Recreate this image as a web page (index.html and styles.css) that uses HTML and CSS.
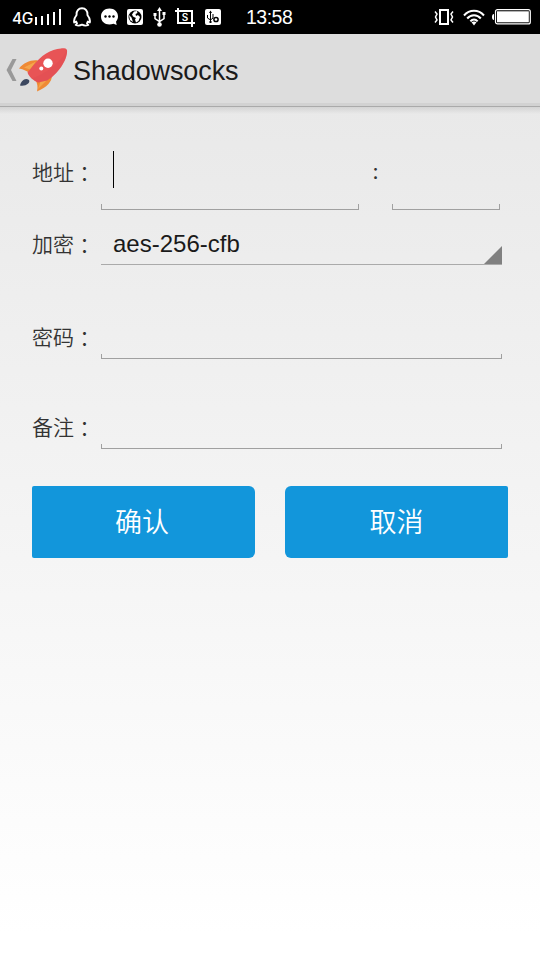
FILE: index.html
```html
<!DOCTYPE html>
<html lang="zh-CN">
<head>
<meta charset="utf-8">
<title>Shadowsocks</title>
<link rel="stylesheet" href="styles.css">
</head>
<body>
<header class="status">
  <span class="network">4G</span>
  <svg class="signal" width="27" height="18" viewBox="0 0 27 18" fill="#fff"><path d="M0 9h2v8H0zM6 8h2v9H6zM12 6h2v11h-2zM18 4h2v13h-2zM24 1h2v16h-2z"/></svg>
  <svg class="qq" width="18" height="20" viewBox="0 0 18 20" fill="none" stroke="#fff" stroke-width="1.900" stroke-linejoin="round"><path d="M3.600 8C3.200 3.800 5.500 1.200 9 1.200S14.800 3.800 14.400 8C16 10 17.500 12.500 16.800 15.500L14.900 14.500 14 16.500 15.300 18C13 19 10.500 18.500 9 17.700 7.500 18.500 5 19 2.700 18L4 16.500 3.100 14.500 1.200 15.500C.5 12.500 2 10 3.600 8Z"/></svg>
  <svg class="bubble" width="17" height="18" viewBox="0 0 17 18"><path fill="#fff" d="M8.500.5C13.500.5 17 4 17 8.500c0 2-.8 3.800-2 5.200l.7 3.300-3.200-1.300C6 18 0 14.700 0 8.500 0 4 3.500.5 8.500.5Z"/><g fill="#000"><circle cx="4.500" cy="8.500" r="1.200"/><circle cx="8.500" cy="8.500" r="1.200"/><circle cx="12.500" cy="8.500" r="1.200"/></g></svg>
  <svg class="globe" width="16" height="16" viewBox="0 0 16 16"><rect width="16" height="16" rx="2" fill="#fff"/><circle cx="8" cy="8" r="6.500" fill="#000"/><path fill="#fff" d="M7 2.500 10 2l.5 2-2 1 .5 2 2-1 2 2-1.500 4-2.500 1.500-1-3 1-1.500-3-1.500L5 5.500ZM2 6l2.500 2.500L6 13 3 11Z"/><path d="M11 2.500 13.500 5l-1 2-2-2Z"/></svg>
  <svg class="usb" width="13" height="20" viewBox="0 0 13 20" fill="none" stroke="#fff" stroke-width="1.500"><path d="M6.500 3v14M2 8v3.500l4.500 3 4.500-3V7"/><path d="M6.500 0 9 4H4Z" fill="#fff" stroke="none"/><circle cx="6.500" cy="17.500" r="2.300" fill="#fff" stroke="none"/><path d="M.5 6h3v3h-3zM9.500 5h3v3h-3z" fill="#fff" stroke="none"/></svg>
  <svg class="crop" width="20" height="19" viewBox="0 0 20 19"><path fill="none" stroke="#fff" stroke-width="2" d="M0 3h17v16M3 0v15h17"/><text class="crop-letter" x="10" y="12.800" text-anchor="middle">S</text></svg>
  <svg class="debug" width="16" height="16" viewBox="0 0 16 16"><rect width="16" height="16" rx="2" fill="#fff"/><g fill="none" stroke="#000"><path d="M5.500 3v10M2.500 6v3l3 2 2.500-2V5"/><circle cx="11" cy="10.500" r="2.100" stroke-width="1.500"/></g><path d="M5.500 1.500 7 4H4ZM4.500 12h2v2h-2z"/></svg>
  <span class="time">13:58</span>
  <svg class="vibrate" width="20" height="18" viewBox="0 0 20 18" fill="none" stroke="#fff"><path stroke-width="2" d="M6 2h8v14H6z"/><path stroke-width="1.500" d="M1 3.500l2 2.500-1.500 3 1.500 3-2 2.500M19 3.500l-2 2.500 1.500 3-1.500 3 2 2.500"/></svg>
  <svg class="wifi" width="22" height="17" viewBox="0 0 22 17" fill="none" stroke="#fff" stroke-width="2"><path d="M1 6.500C6.500.2 15.500.2 21 6.500M4.200 9.500c3.800-4.500 9.800-4.500 13.600 0M7.400 12.300c2-2.500 5.200-2.500 7.200 0"/><path d="M8.500 13.300q2.500-1.800 5 0L11 16.500Z" fill="#fff" stroke="none"/></svg>
  <svg class="battery" width="39" height="16" viewBox="0 0 39 16"><path d="M2 5Q0 5 0 8t2 3Z" fill="#fff"/><rect x="3.500" y=".7" width="34.800" height="14.200" rx="2" fill="none" stroke="#fff" stroke-width="1.200"/><rect x="5" y="2.300" width="31.800" height="11" fill="#fff"/></svg>
</header>
<nav class="bar">
  <svg class="back" width="11" height="22" viewBox="0 0 11 22"><path fill="#999" d="M6.500 0H10.500L5 11l5.500 11H6.500L.5 11Z"/></svg>
  <svg class="rocket" width="50" height="46" viewBox="0 0 50 46">
    <path fill="#ef8a35" d="M1 21.500C6 15.500 13 12.500 20 13.500L11 26C9 24 6 22.500 1 21.500ZM34 28C34 35 29 40 19 44.500 20 40 19.500 37 17.500 33Z"/>
    <path fill="#f4a64c" d="M6 20.500 18 14.500l-6 8ZM20 42l3-9 8-2Z"/>
    <path fill="#e85456" d="M49 3C50 13 39 28 29 33.500L20 35.500C16 34 11 30 9.500 25.500L14 20C23 8 33 2 43 1.400 46 1.200 48.500 1.500 49 3Z"/>
    <path fill="#dc4850" d="M49 3C50 13 39 28 29 33.500L20 35.500 14 31.500C29 26 42 16 49 3Z" opacity=".3"/>
    <circle cx="30" cy="16.300" r="4.700" fill="#fff"/><circle cx="23.300" cy="21.500" r="2" fill="#fff"/>
    <path fill="#3c4860" d="M2 38.500C3 34 7 30 11 33 12.500 36 8 39.500 2 38.500Z"/>
  </svg>
  <h1>Shadowsocks</h1>
</nav>
<main class="form">
  <div class="row address">
    <label>地址<span lang="zh-TW">：</span></label>
    <div class="field host"><i class="caret"></i></div>
    <span class="sep">:</span>
    <div class="field port"></div>
  </div>
  <div class="row method">
    <label>加密<span lang="zh-TW">：</span></label>
    <div class="select">aes-256-cfb<svg class="corner" width="18" height="18" viewBox="0 0 18 18"><path fill="#808080" d="M18 0v18H0Z"/></svg></div>
  </div>
  <div class="row password"><label>密码<span lang="zh-TW">：</span></label><div class="field"></div></div>
  <div class="row remark"><label>备注<span lang="zh-TW">：</span></label><div class="field"></div></div>
  <div class="actions">
    <button class="ok">确认</button>
    <button class="cancel">取消</button>
  </div>
</main>
</body>
</html>
```
FILE: styles.css
```css
* { box-sizing: border-box; }
body {
  margin: 0;
  height: 960px;
  overflow: hidden;
  display: flex;
  flex-direction: column;
  font-family: "Liberation Sans", "Noto Sans CJK SC", sans-serif;
  background: #fff;
}
svg { display: block; flex: none; }
.status {
  height: 34px;
  flex: none;
  display: flex;
  align-items: center;
  padding: 0 9px 0 12px;
  background: #000;
  color: #fff;
}
.network { width: 23px; font: 500 15.5px/18px Inter, sans-serif; padding-top: 4px; letter-spacing: -.5px; }
.qq { margin-left: 11px; }
.bubble { margin-left: 10px; }
.globe { margin-left: 9px; }
.usb { margin-left: 10px; }
.crop { margin-left: 9px; }
.crop-letter { font: 600 10px Inter, sans-serif; fill: #fff; }
.debug { margin-left: 10px; }
.time { margin-left: 25px; font-size: 19.5px; letter-spacing: -.5px; padding-top: 1px; }
.vibrate { margin-left: auto; }
.wifi { margin-left: 9px; }
.battery { margin-left: 7px; }
.bar {
  height: 73px;
  flex: none;
  display: flex;
  align-items: center;
  padding: 0 0 1px 6px;
  background: #ddd;
  border-bottom: 1px solid #aaa;
  box-shadow: inset 0 -3px #d2d2d2;
}
.rocket { margin-left: 1px; }
h1 {
  margin: 0 0 0 5px;
  padding-top: 2px;
  font-size: 27px;
  font-weight: 400;
  line-height: 36px;
  letter-spacing: -.1px;
  color: #1a1a1a;
}
.form {
  flex: 1;
  padding: 29px 32px 0;
  background: linear-gradient(rgba(0, 0, 0, .09), transparent 7px), linear-gradient(#e9e9e9, #fff 97%);
}
.row { display: flex; align-items: flex-end; }
label {
  display: flex;
  width: 69px;
  height: 30px;
  flex: none;
  font: 350 21px/30px "Noto Sans CJK SC", sans-serif;
  color: #333;
  white-space: nowrap;
}
label span { padding-top: 1px; font-family: "Noto Sans CJK TC", sans-serif; }
.address { height: 74px; }
.address label { margin-bottom: 24px; }
.method { height: 55px; }
.method label { margin-bottom: 7px; }
.password { height: 94px; }
.remark { height: 90px; }
.password label, .remark label { margin-bottom: 8px; }
.field {
  width: 401px;
  height: 5px;
  border: solid #a0a0a0;
  border-width: 0 1px 1px;
}
.host, .port {
  height: 59px;
  border-width: 0 0 1px;
  background: linear-gradient(#a0a0a0, #a0a0a0) left bottom / 1px 5px no-repeat, linear-gradient(#a0a0a0, #a0a0a0) right bottom / 1px 5px no-repeat;
}
.host { width: 258px; }
.port { width: 108px; }
.caret { display: block; width: 1px; height: 37px; margin-left: 12px; background: #000; }
.sep { width: 33px; text-align: center; font: 21px/30px Inter, sans-serif; margin-bottom: 23px; color: #333; }
.select {
  width: 401px;
  height: 41px;
  display: flex;
  align-items: flex-end;
  justify-content: space-between;
  padding-left: 12px;
  border-bottom: 1px solid #aaa;
  font-size: 24px;
  line-height: 40px;
  color: #1a1a1a;
}
.actions { display: grid; grid-template-columns: 223px 223px; gap: 30px; margin-top: 37px; }
button {
  height: 72px;
  padding: 0 0 3px;
  border: 0;
  background: #1296db;
  color: #fff;
  font: 350 27px "Noto Sans CJK SC", sans-serif;
}
.ok { border-radius: 2px 6px 6px 2px; padding-right: 3px; }
.cancel { border-radius: 6px 2px 2px 6px; }
```
